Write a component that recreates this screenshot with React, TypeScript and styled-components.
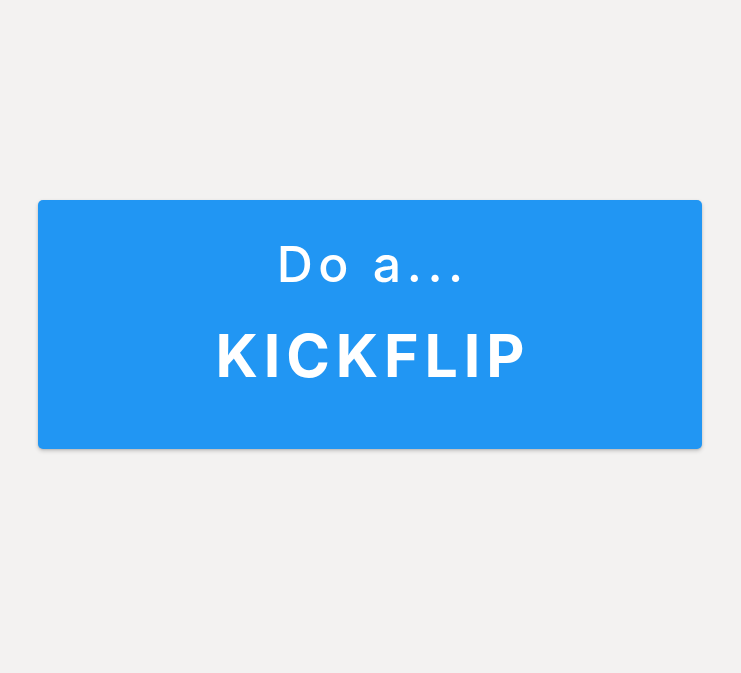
import React from "react";
import styled, { createGlobalStyle } from "styled-components";

const Global = createGlobalStyle`
  html, body { margin: 0; padding: 0; background: #f3f2f1; }
  body { font-family: Inter, "Noto Sans", sans-serif; }
`;

const Page = styled.div`
  width: 741px;
  height: 673px;
  box-sizing: border-box;
  padding: 200px 0 0 38px;
`;

const Button = styled.button`
  width: 664px;
  height: 249px;
  box-sizing: border-box;
  border: none;
  border-radius: 5px;
  background: #2196f3;
  color: #fff;
  display: flex;
  flex-direction: column;
  align-items: center;
  justify-content: flex-start;
  gap: 37px;
  padding: 39px 0 0;
  box-shadow: 0 2px 4px rgba(0, 0, 0, 0.18), 0 1px 2px rgba(0, 0, 0, 0.1);
  font-family: Inter, "Noto Sans", sans-serif;
  cursor: pointer;
`;

const Lead = styled.span`
  font-size: 50px;
  font-weight: 500;
  letter-spacing: 0.11em;
  margin-right: -0.11em;
  line-height: 1;
`;

const Trick = styled.span`
  font-size: 59px;
  font-weight: 700;
  letter-spacing: 0.1em;
  margin-right: -0.1em;
  line-height: 1;
`;

export default function App() {
  return (
    <>
      <Global />
      <Page>
        <Button>
          <Lead>Do a...</Lead>
          <Trick>KICKFLIP</Trick>
        </Button>
      </Page>
    </>
  );
}
